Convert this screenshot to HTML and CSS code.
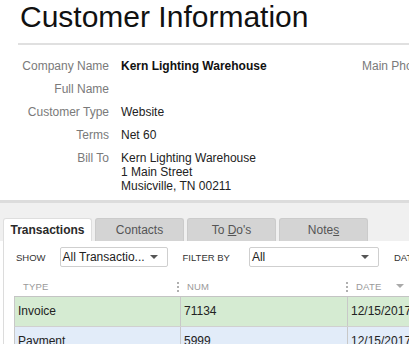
FILE: index.html
```html
<!DOCTYPE html>
<html>
<head>
<meta charset="utf-8">
<link rel="stylesheet" href="styles.css">
</head>
<body>
<div class="page">
  <h1 class="title">Customer Information</h1>
  <div class="rule"></div>
  <div class="info">
    <div class="fields">
      <div class="label">Company Name</div><div class="value strong">Kern Lighting Warehouse</div>
      <div class="label">Full Name</div><div class="value"></div>
      <div class="label">Customer Type</div><div class="value">Website</div>
      <div class="label">Terms</div><div class="value">Net 60</div>
      <div class="label">Bill To</div><div class="value">Kern Lighting Warehouse<br>1 Main Street<br>Musicville, TN 00211</div>
    </div>
    <div class="side">
      <div class="label">Main Phone</div>
    </div>
  </div>
  <div class="tabbar">
    <div class="tab active">Transactions</div>
    <div class="tab">Contacts</div>
    <div class="tab">To <u>D</u>o's</div>
    <div class="tab">Note<u>s</u></div>
  </div>
  <div class="panel">
    <div class="filters">
      <span class="flabel show">SHOW</span>
      <div class="select s1"><span>All Transactio...</span><i class="caret"></i></div>
      <span class="flabel filter">FILTER BY</span>
      <div class="select s2"><span>All</span><i class="caret"></i></div>
      <span class="flabel date">DATE</span>
    </div>
    <div class="table">
      <div class="thead">
        <div class="th th1">TYPE</div>
        <div class="th"><b class="dots"></b><span>NUM</span></div>
        <div class="th"><b class="dots"></b><span>DATE</span><i class="sort"></i></div>
      </div>
      <div class="row green">
        <div class="td">Invoice</div>
        <div class="td">71134</div>
        <div class="td last">12/15/2017</div>
      </div>
      <div class="row blue">
        <div class="td">Payment</div>
        <div class="td">5999</div>
        <div class="td last">12/15/2017</div>
      </div>
    </div>
  </div>
</div>
</body>
</html>
```

FILE: styles.css
```css
html, body {
  margin: 0;
  padding: 0;
  background: #fff;
  overflow: hidden;
}
body {
  font-family: "Liberation Sans", Arial, sans-serif;
  color: #222;
  width: 409px;
  height: 344px;
}
.page {
  width: 520px;
}
.title {
  margin: 0;
  padding-left: 20px;
  font-size: 30px;
  line-height: 33px;
  font-weight: normal;
  color: #111;
}
.rule {
  margin: 10px 0 0 18px;
  height: 2px;
  background: #e0e0e0;
}
.info {
  display: flex;
  margin-top: 14px;
}
.fields {
  display: grid;
  grid-template-columns: 109px 230px;
  column-gap: 12px;
  row-gap: 9px;
  font-size: 12px;
  line-height: 14px;
  width: 362px;
}
.label {
  text-align: right;
  color: #7a7a7a;
  white-space: nowrap;
}
.value {
  color: #222;
  min-height: 14px;
}
.strong {
  font-weight: bold;
  color: #111;
}
.side {
  font-size: 12px;
  line-height: 14px;
}
.side .label {
  text-align: left;
}
.tabbar {
  margin-top: 7px;
  border-top: 3px solid #dcdcdc;
  background: #f0f0f0;
  padding: 15px 0 0 3px;
  display: flex;
  gap: 3px;
  height: 23px;
}
.tab {
  width: 89px;
  height: 23px;
  box-sizing: border-box;
  background: #d4d4d4;
  border: 1px solid #cbcbcb;
  border-bottom: none;
  border-radius: 3px 3px 0 0;
  font-size: 12px;
  line-height: 22px;
  text-align: center;
  color: #555;
}
.tab.active {
  background: #fff;
  border-color: #dedede;
  font-weight: bold;
  color: #2a2a2a;
}
.panel {
  margin-left: 3px;
  border-left: 1px solid #dcdcdc;
  background: #fff;
  padding: 6px 0 0 10px;
  height: 120px;
}
.filters {
  display: flex;
  align-items: center;
  height: 20px;
  margin-left: 2px;
}
.flabel {
  font-size: 9.5px;
  color: #333;
  white-space: nowrap;
}
.show { margin-right: 14px; }
.filter { margin-left: 15px; margin-right: 19px; }
.date { margin-left: 15px; }
.select {
  box-sizing: border-box;
  height: 20px;
  border: 1px solid #cfcfcf;
  border-radius: 2px;
  display: flex;
  align-items: center;
  justify-content: space-between;
  padding: 0 9px 0 2px;
  font-size: 12px;
  color: #222;
  background: #fff;
}
.s1 { width: 108px; }
.s2 { width: 130px; }
.caret {
  width: 0;
  height: 0;
  border-left: 4px solid transparent;
  border-right: 4px solid transparent;
  border-top: 4px solid #555;
}
.table {
  margin-top: 9px;
  font-size: 12px;
}
.thead {
  display: grid;
  grid-template-columns: 163px 169px 1fr;
  height: 20px;
  border-bottom: 1px solid #c4c4c4;
}
.th {
  display: flex;
  align-items: center;
  gap: 8px;
  font-size: 9.5px;
  color: #9a9a9a;
  letter-spacing: 0.2px;
}
.th1 {
  padding-left: 9px;
}
.dots {
  width: 2px;
  height: 11px;
  background-image: radial-gradient(circle, #b0b0b0 0.9px, transparent 1px);
  background-size: 2px 4px;
}
.sort {
  margin-left: 7px;
  width: 0;
  height: 0;
  border-left: 4px solid transparent;
  border-right: 4px solid transparent;
  border-top: 4px solid #aaa;
}
.row {
  display: grid;
  grid-template-columns: 166px 167px 1fr;
  height: 30px;
  box-sizing: border-box;
  border-left: 1px solid #c8c8c8;
  border-bottom: 1px solid #d0d0d0;
}
.green { background: #d5ebd2; }
.blue { background: #e2ecf9; }
.td {
  padding-left: 3px;
  line-height: 29px;
  border-right: 1px solid #c8c8c8;
  color: #222;
  white-space: nowrap;
}
.td.last {
  border-right: none;
}
```
